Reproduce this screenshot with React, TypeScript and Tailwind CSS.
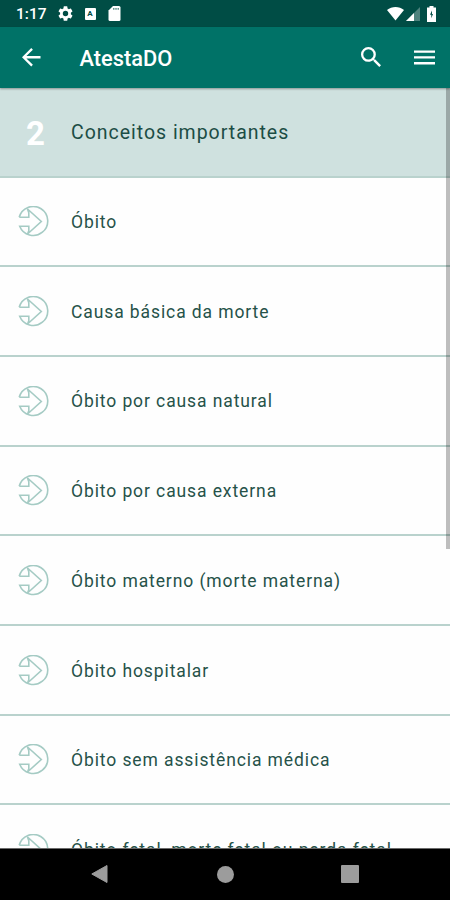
import React from 'react';

interface TopicRowProps {
  label: string;
}

const topics = [
  'Óbito',
  'Causa básica da morte',
  'Óbito por causa natural',
  'Óbito por causa externa',
  'Óbito materno (morte materna)',
  'Óbito hospitalar',
  'Óbito sem assistência médica',
  'Óbito fetal, morte fetal ou perda fetal',
];

const StatusBar: React.FC = () => (
  <div className="flex h-[27px] shrink-0 items-center bg-[#004d45] pl-4 pr-[14px] text-white">
    <span className="w-[31px] pt-[3px] text-[15.5px] font-medium leading-none">1:17</span>
    <svg viewBox="2 2 20 20" className="ml-[11px] size-[15px]" fill="currentColor">
      <path d="M19.14 12.94c.04-.3.06-.61.06-.94 0-.32-.02-.64-.07-.94l2.03-1.58a.49.49 0 0 0 .12-.61l-1.92-3.32a.49.49 0 0 0-.59-.22l-2.39.96c-.5-.38-1.03-.7-1.62-.94l-.36-2.54a.48.48 0 0 0-.48-.41h-3.84a.47.47 0 0 0-.47.41l-.36 2.54c-.59.24-1.13.57-1.62.94l-2.39-.96a.48.48 0 0 0-.59.22L2.74 8.87a.48.48 0 0 0 .12.61l2.03 1.58c-.05.3-.09.63-.09.94s.02.64.07.94l-2.03 1.58a.49.49 0 0 0-.12.61l1.92 3.32c.12.22.37.29.59.22l2.39-.96c.5.38 1.03.7 1.62.94l.36 2.54c.05.24.24.41.48.41h3.84c.24 0 .44-.17.47-.41l.36-2.54c.59-.24 1.13-.56 1.62-.94l2.39.96c.22.08.47 0 .59-.22l1.92-3.32a.48.48 0 0 0-.12-.61zM12 15.6A3.6 3.6 0 1 1 12 8.4a3.6 3.6 0 0 1 0 7.2z" />
    </svg>
    <span className="ml-[11.5px] flex h-3 w-[11px] items-center justify-center rounded-[1px] bg-white text-[8px] font-bold leading-none text-[#004d45]">A</span>
    <svg viewBox="4 2 16 20" className="ml-[12px] h-[15px] w-[13px]" fill="currentColor">
      <path d="M18 2h-8L4.02 8 4 20a2 2 0 0 0 2 2h12a2 2 0 0 0 2-2V4a2 2 0 0 0-2-2z" />
      <path d="M10 4.500h2V7h-2zm3 0h2V7h-2zm3 0h2V7h-2z" fill="#004d45" opacity=".6" />
    </svg>
    <svg viewBox="0 0 17 14" className="ml-auto h-[14px] w-[17px]" fill="currentColor">
      <path d="M0 3C4.800-1 12.200-1 17 3L8.500 13.500z" />
    </svg>
    <svg viewBox="0 0 14 14" className="ml-[2px] mt-px size-[14px]" fill="currentColor">
      <path d="M0 14L14 0v14z" opacity=".3" />
      <path d="M0 14L8 6v8z" />
    </svg>
    <svg viewBox="0 0 9 16" className="ml-[7px] h-4 w-[9px]">
      <path d="M2.500 0h4v1.500H9V16H0V1.500h2.500z" fill="#fff" />
      <path d="M5 4.500L3 8.800h1.300v3.400L6 7.900H5z" fill="#004d45" />
    </svg>
  </div>
);

const AppBar: React.FC = () => (
  <header className="relative z-10 flex h-[60.5px] shrink-0 items-center bg-[#007267] pl-[22px] pr-[15px] text-white shadow-[0_1px_2px_rgba(0,0,0,0.35)]">
    <svg viewBox="4 4 16 16" className="size-[18.5px]" fill="currentColor">
      <path d="M20 11H7.830l5.590-5.590L12 4l-8 8 8 8 1.410-1.410L7.830 13H20z" />
    </svg>
    <h1 className="ml-[39px] pt-[3px] text-[21.8px] font-medium leading-none">AtestaDO</h1>
    <svg viewBox="3 3 17.500 17.500" className="ml-auto size-[20px]" fill="currentColor">
      <path d="M15.500 14h-.79l-.28-.27A6.470 6.470 0 0 0 16 9.500 6.500 6.500 0 1 0 9.500 16c1.610 0 3.090-.59 4.230-1.570l.27.28v.79l5 4.990L20.490 19zm-6 0a4.500 4.500 0 1 1 0-9 4.500 4.500 0 0 1 0 9z" />
    </svg>
    <svg viewBox="0 0 21 15" className="ml-[33px] h-[15px] w-[21px]" fill="currentColor">
      <path d="M0 .5h21v2.300H0zM0 6.300h21v2.300H0zM0 12.100h21v2.300H0z" />
    </svg>
  </header>
);

const TopicRow: React.FC<TopicRowProps> = ({ label }) => (
  <li className="flex h-[89.700px] shrink-0 items-center border-b-2 border-[#b9d2cd] pl-[18px] pt-px">
    <svg viewBox="0 0 31 31" className="size-[31px] shrink-0" fill="none" stroke="#a5cbc4" strokeWidth="1.600">
      <path d="M1.200 11.300A14.500 14.500 0 1 1 1.700 20.200H10.800V24.800L9.500 28M1.200 11.300H10.800V6.700L9.500 3L23.300 15.500L9.500 28" />
    </svg>
    <span className="ml-[22px] whitespace-nowrap pt-[2px] text-[17.500px] leading-none tracking-[0.900px] text-[#265249]">{label}</span>
  </li>
);

const NavigationBar: React.FC = () => (
  <nav className="flex h-[52px] shrink-0 items-center border-t border-[#6b6b6b] bg-black pb-px pl-[91px] text-[#9c9c9c]">
    <svg viewBox="0 0 17 18" className="h-[18px] w-[17px]" fill="currentColor">
      <path d="M16 .5v17L.8 9z" stroke="currentColor" strokeLinejoin="round" />
    </svg>
    <span className="ml-[109px] size-[17px] rounded-full bg-[#9c9c9c]" />
    <span className="ml-[107px] size-[17.500px] rounded-[1px] bg-[#9c9c9c]" />
  </nav>
);

export default function App() {
  return (
    <div className="flex h-[900px] w-[450px] flex-col overflow-hidden bg-[#fefefe] font-['Roboto',sans-serif]">
      <StatusBar />
      <AppBar />
      <main className="relative min-h-0 flex-1 overflow-hidden">
        <div className="flex h-[90px] items-center border-b-2 border-[#b9d2cd] bg-[#cfe1df] pl-[26px]">
          <span className="w-[45px] pt-[3px] text-[33px] font-bold leading-none text-white">2</span>
          <h2 className="pt-[3px] text-[19.500px] leading-none tracking-[0.980px] text-[#1c4d45]">Conceitos importantes</h2>
        </div>
        <ul className="flex flex-col">
          {topics.map((topic) => (
            <TopicRow key={topic} label={topic} />
          ))}
        </ul>
        {/* Scroll indicator */}
        <div className="absolute right-0 top-0 h-[461px] w-1 bg-black/25" />
      </main>
      <NavigationBar />
    </div>
  );
}
